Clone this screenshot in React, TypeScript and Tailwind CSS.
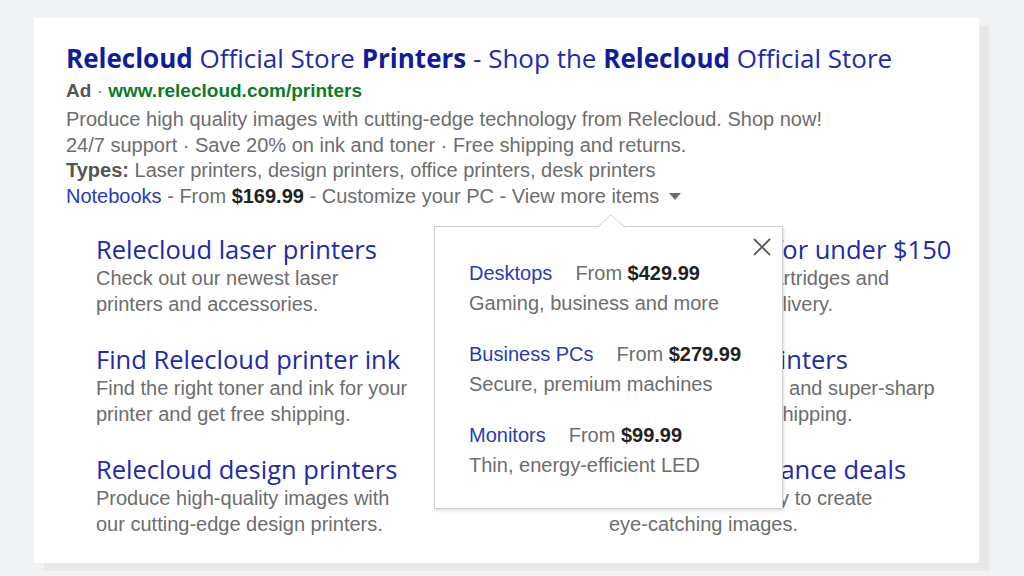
import React from 'react';

const heading = "font-['Segoe_UI','Open_Sans',sans-serif]";
const body = "font-['Liberation_Sans','Arial',sans-serif]";

interface Sitelink {
  title: string;
  lines: string[];
}

const leftLinks: Sitelink[] = [
  { title: 'Relecloud laser printers', lines: ['Check out our newest laser', 'printers and accessories.'] },
  { title: 'Find Relecloud printer ink', lines: ['Find the right toner and ink for your', 'printer and get free shipping.'] },
  { title: 'Relecloud design printers', lines: ['Produce high-quality images with', 'our cutting-edge design printers.'] },
];

const rightLinks: Sitelink[] = [
  { title: 'Relecloud ink for under $150', lines: ['Shop original ink cartridges and', 'enjoy quick, free delivery.'] },
  { title: 'Shop photo printers', lines: ['Enjoy vibrant colors and super-sharp', 'pictures, plus free shipping.'] },
  { title: 'Great performance deals', lines: ['Use new technology to create', 'eye-catching images.'] },
];

const popupItems = [
  { name: 'Desktops', price: '$429.99', desc: 'Gaming, business and more' },
  { name: 'Business PCs', price: '$279.99', desc: 'Secure, premium machines' },
  { name: 'Monitors', price: '$99.99', desc: 'Thin, energy-efficient LED' },
];

function SitelinkColumn({ links, className }: { links: Sitelink[]; className?: string }) {
  return (
    <div className={`flex flex-col gap-[25px] ${className ?? ''}`}>
      {links.map((l) => (
        <div key={l.title}>
          <div className={`${heading} text-[25.5px] leading-[34px] text-[#2129ad] whitespace-nowrap`}>{l.title}</div>
          {l.lines.map((line) => (
            <div key={line} className={`${body} text-[20px] leading-[25.5px] text-[#6d6d6d] whitespace-nowrap`}>
              {line}
            </div>
          ))}
        </div>
      ))}
    </div>
  );
}

function MoreItemsPopup() {
  return (
    <div className="absolute left-[400px] top-[208px] w-[349px] h-[283px] bg-white border border-[#cfcfcf] shadow-[1px_2px_3px_rgba(0,0,0,0.12)]">
      {/* caret */}
      <svg className="absolute left-[162px] top-[-13px]" width="28" height="14" viewBox="0 0 28 14">
        <polygon points="0,14 14,1 28,14" fill="#ffffff" />
        <polyline points="0,13.5 14,1 28,13.5" fill="none" stroke="#cfcfcf" strokeWidth="1" />
      </svg>
      {/* close */}
      <svg className="absolute right-[10px] top-[10px]" width="20" height="20" viewBox="0 0 20 20">
        <path d="M2 2 L18 18 M18 2 L2 18" stroke="#5a5a5a" strokeWidth="1.8" fill="none" />
      </svg>
      <div className={`${body} pt-[31px] pl-[34px] flex flex-col gap-[21px] text-[20px]`}>
        {popupItems.map((it) => (
          <div key={it.name}>
            <div className="leading-[30px] whitespace-nowrap">
              <span className="text-[#2a3ab8]">{it.name}</span>
              <span className="ml-[23px] text-[#6d6d6d]">
                From <b className="text-[#222]">{it.price}</b>
              </span>
            </div>
            <div className="leading-[30px] text-[#6d6d6d] whitespace-nowrap">{it.desc}</div>
          </div>
        ))}
      </div>
    </div>
  );
}

export default function App() {
  return (
    <div className="w-[1024px] h-[576px] overflow-hidden bg-[#f1f2f4] pt-[18px] pl-[34px]">
      <div className="relative w-[945px] h-[545px] bg-white shadow-[10px_8px_0_0_#e8e8e8] pt-[22px] pl-[32px]">
        {/* ad header */}
        <div className={`${heading} text-[26px] leading-[36px] text-[#2129ad] whitespace-nowrap`}>
          <b className="text-[#101c9e]">Relecloud</b> Official Store <b className="text-[#101c9e]">Printers</b> - Shop the{' '}
          <b className="text-[#101c9e]">Relecloud</b> Official Store
        </div>
        <div className={`${body} text-[19px] leading-[28px] font-bold whitespace-nowrap mt-[1px]`}>
          <span className="text-[#555]">Ad</span>
          <span className="text-[#888] font-normal"> · </span>
          <span className="text-[#0e7a26]">www.relecloud.com/printers</span>
        </div>
        <div className={`${body} text-[20px] leading-[25.5px] text-[#6d6d6d] whitespace-nowrap mt-[2px]`}>
          <div>Produce high quality images with cutting-edge technology from Relecloud. Shop now!</div>
          <div>24/7 support · Save 20% on ink and toner · Free shipping and returns.</div>
          <div>
            <b className="text-[#555]">Types:</b> Laser printers, design printers, office printers, desk printers
          </div>
          <div className="flex items-center">
            <span>
              <span className="text-[#2a3ab8]">Notebooks</span> - From <b className="text-[#222]">$169.99</b> - Customize
              your PC - View more items
            </span>
            <svg className="ml-[10px]" width="12" height="7" viewBox="0 0 12 7">
              <polygon points="0,0 12,0 6,7" fill="#6d6d6d" />
            </svg>
          </div>
        </div>

        {/* sitelinks */}
        <div className="flex mt-[23px] pl-[30px]">
          <SitelinkColumn links={leftLinks} className="w-[513px]" />
          <SitelinkColumn links={rightLinks} />
        </div>

        <MoreItemsPopup />
      </div>
    </div>
  );
}
